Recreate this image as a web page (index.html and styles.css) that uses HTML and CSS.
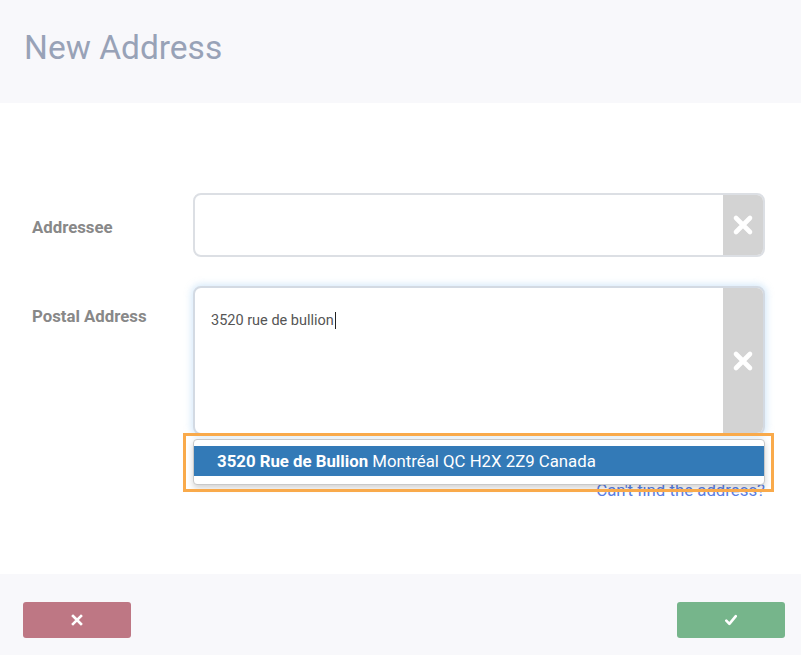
FILE: index.html
```html
<!DOCTYPE html>
<html lang="en">
<head>
<meta charset="utf-8">
<title>New Address</title>
<link rel="stylesheet" href="styles.css">
</head>
<body>
<div class="modal">
  <header class="head">
    <h1 class="title">New Address</h1>
  </header>
  <main class="content">
    <div class="row row-center">
      <div class="label label-mid">Addressee</div>
      <div class="field field-short">
        <div class="input"></div>
        <button class="clear" type="button" aria-label="Clear">
          <svg width="22" height="22" viewBox="0 0 22 22"><path d="M4 4 L18 18 M18 4 L4 18" stroke="#fff" stroke-width="4.6" stroke-linecap="round" fill="none"/></svg>
        </button>
      </div>
    </div>
    <div class="row row-top">
      <div class="label label-top">Postal Address</div>
      <div class="field-wrap">
        <div class="field field-tall focused">
          <div class="input input-text"><span>3520 rue de bullion</span><span class="caret"></span></div>
          <button class="clear" type="button" aria-label="Clear">
            <svg width="22" height="22" viewBox="0 0 22 22"><path d="M4 4 L18 18 M18 4 L4 18" stroke="#fff" stroke-width="4.6" stroke-linecap="round" fill="none"/></svg>
          </button>
        </div>
        <div class="link-row"><a class="link" href="#">Can't find the address?</a></div>
        <ul class="suggest">
          <li class="suggest-item active"><b>3520 Rue de Bullion</b> Montréal QC H2X 2Z9 Canada</li>
        </ul>
        <div class="suggest-outline"></div>
      </div>
    </div>
  </main>
  <footer class="foot">
    <button class="btn btn-cancel" type="button" aria-label="Cancel">
      <svg width="12" height="12" viewBox="0 0 12 12"><path d="M2 2 L10 10 M10 2 L2 10" stroke="#fff" stroke-width="2.6" stroke-linecap="square" fill="none"/></svg>
    </button>
    <button class="btn btn-ok" type="button" aria-label="Confirm">
      <svg width="12" height="12" viewBox="0 0 12 12"><path d="M1.3 6.6 L4.4 9.8 L10.8 2.2" stroke="#fff" stroke-width="2.6" stroke-linecap="round" stroke-linejoin="round" fill="none"/></svg>
    </button>
  </footer>
</div>
</body>
</html>
```

FILE: styles.css
```css
* { box-sizing: border-box; }
html, body { margin: 0; padding: 0; }
body {
  font-family: Roboto, "Liberation Sans", Arial, sans-serif;
  background: #fff;
  width: 801px;
  height: 655px;
  overflow: hidden;
}
.modal {
  display: flex;
  flex-direction: column;
  height: 655px;
}
.head {
  height: 103px;
  background: #f8f8fb;
  padding: 28px 24px 0;
}
.title {
  margin: 0;
  font-size: 33.5px;
  font-weight: 400;
  line-height: 40px;
  color: #98a2b7;
}
.content {
  flex: 1;
  padding: 90px 36px 0 32px;
}
.row {
  display: flex;
}
.row-center { align-items: center; }
.row-top { margin-top: 29px; align-items: flex-start; }
.label {
  width: 161px;
  font-size: 16.8px;
  font-weight: 700;
  color: #888;
  line-height: 20px;
}
.label-mid { padding-top: 3px; }
.label-top { padding-top: 20px; }
.field-wrap {
  position: relative;
  width: 572px;
}
.field {
  display: flex;
  width: 572px;
  border: 2px solid #dcdfe4;
  border-radius: 8px;
  background: #fff;
}
.field-short { height: 64px; }
.field-tall { height: 149px; }
.focused {
  border-color: #d3dae3;
  box-shadow: 0 0 7px 2px rgba(140, 195, 240, 0.35);
}
.input {
  flex: 1;
}
.input-text {
  padding: 24px 0 0 16px;
  font-size: 14.5px;
  line-height: 18px;
  color: #555;
  display: flex;
  align-items: flex-start;
}
.caret {
  display: inline-block;
  width: 1px;
  height: 17px;
  background: #222;
  margin-left: 1px;
}
.clear {
  width: 40px;
  border: 0;
  padding: 0;
  background: #d3d3d3;
  border-radius: 0 6px 6px 0;
  display: flex;
  align-items: center;
  justify-content: center;
}
.link-row {
  display: flex;
  justify-content: flex-end;
  margin-top: 46px;
}
.link {
  font-size: 16.8px;
  line-height: 18px;
  color: #5a7ee3;
  text-decoration: none;
}
.suggest {
  position: absolute;
  top: 153px;
  left: 0;
  width: 572px;
  margin: 0;
  padding: 6px 0 8px;
  list-style: none;
  background: #fff;
  border: 1px solid #c9c9c9;
  border-radius: 4px;
  box-shadow: 0 3px 6px rgba(0, 0, 0, 0.18);
}
.suggest-item {
  height: 30px;
  line-height: 30px;
  padding-left: 23px;
  font-size: 16.8px;
  color: #333;
  white-space: nowrap;
}
.suggest-item.active {
  background: #337ab7;
  color: #fff;
}
.suggest-item b { font-weight: 700; }
.suggest-outline {
  position: absolute;
  top: 147px;
  left: -10px;
  width: 591px;
  height: 59px;
  border: 3px solid #f9aa4b;
  pointer-events: none;
}
.foot {
  height: 81px;
  background: #f8f8fb;
  display: flex;
  justify-content: space-between;
  align-items: flex-start;
  padding: 28px 16px 0 23px;
}
.btn {
  width: 108px;
  height: 36px;
  border: 0;
  border-radius: 3px;
  padding: 0;
  display: flex;
  align-items: center;
  justify-content: center;
}
.btn-cancel { background: #be7784; }
.btn-ok { background: #76b58b; }
```
